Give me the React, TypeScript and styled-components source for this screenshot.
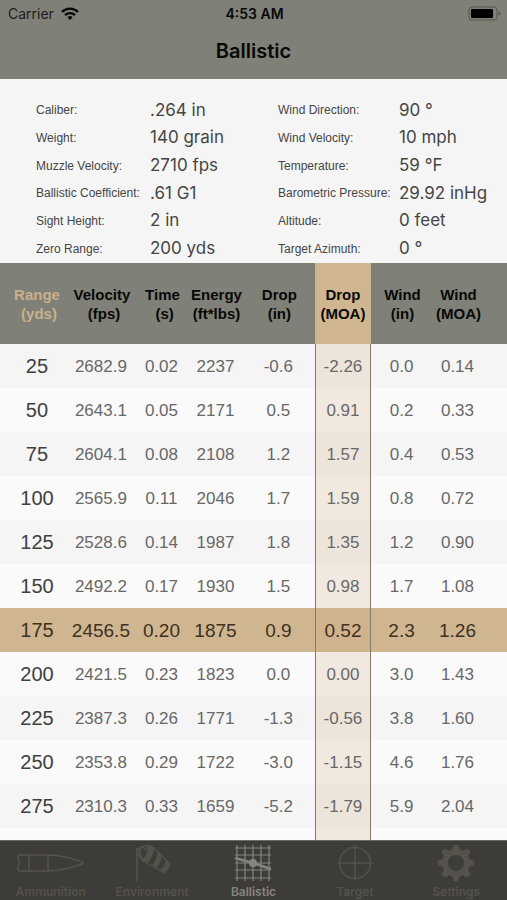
import React from "react";
import styled, { createGlobalStyle } from "styled-components";

const color = {
  bar: "#7f8077",
  ink: "#080806",
  sand: "#d0b690",
  page: "#f5f5f5",
  stripe: "#fafafa",
  tabs: "#3d3c39",
};

const system = `Inter, "Liberation Sans", sans-serif`;
const grotesk = `"Liberation Sans", Arial, sans-serif`;

const GlobalStyle = createGlobalStyle`
  *, *::before, *::after { box-sizing: border-box; }
  body { margin: 0; background: ${color.page}; }
`;

const Page = styled.div`
  display: flex;
  flex-direction: column;
  min-height: 100vh;
  font-family: ${system};
  background: ${color.page};
`;

const Header = styled.header`
  background: ${color.bar};
  color: ${color.ink};
  padding-bottom: 3px;
`;

const StatusBar = styled.div`
  display: grid;
  grid-template-columns: 1fr auto 1fr;
  align-items: center;
  height: 27px;
  padding: 0 6px 0 8px;
  font-size: 14px;
`;

const Carrier = styled.div`
  display: flex;
  align-items: center;
  gap: 7px;
  color: #1d1d1a;
`;

const Clock = styled.div`
  font-weight: 600;
`;

const Power = styled.div`
  display: flex;
  justify-content: flex-end;
`;

const Title = styled.h1`
  margin: 0;
  line-height: 49px;
  font-size: 20px;
  font-weight: 600;
  text-align: center;
`;

const Conditions = styled.section`
  display: grid;
  grid-template-columns: 242fr 229fr;
  padding: 17px 0 1px 36px;
`;

const Facts = styled.dl<{ $label: number }>`
  display: grid;
  grid-template-columns: ${(p) => p.$label}px 1fr;
  grid-template-rows: repeat(6, 1fr);
  align-items: center;
  height: 166px;
  margin: 0;
  color: #454545;
  white-space: nowrap;
`;

const Label = styled.dt`
  padding-top: 1px;
  font: 12px/24px ${grotesk};
`;

const Value = styled.dd`
  margin: 0;
  font-size: 17px;
  line-height: 24px;
`;

const Results = styled.main`
  flex: 1;
`;

const Table = styled.table`
  width: 100%;
  table-layout: fixed;
  border-collapse: separate;
  border-spacing: 0;
  font-family: ${grotesk};
  text-align: center;
  white-space: nowrap;
`;

const Col = styled.col<{ $share: number }>`
  width: ${(p) => p.$share}%;
`;

const HeadCell = styled.th<{ $tone?: "range" | "marked" }>`
  height: 81px;
  padding: 1px 0 0;
  font-size: 15px;
  line-height: 19px;
  font-weight: 700;
  color: ${(p) => (p.$tone === "range" ? "#c9b08b" : color.ink)};
  background: ${(p) => (p.$tone === "marked" ? color.sand : color.bar)};
  &:first-child { padding-left: 6px; }
  &:last-child { padding-right: 24px; }
`;

const Row = styled.tr<{ $active?: boolean }>`
  height: 44px;
  background: ${color.page};
  color: ${(p) => (p.$active ? "#3d3120" : "#686868")};
  font-size: ${(p) => (p.$active ? 19 : 17)}px;
  &:nth-child(even) { background: ${color.stripe}; }
  &&:nth-child(n) { ${(p) => (p.$active ? `background: ${color.sand};` : "")} }
`;

const RangeCell = styled.th<{ $active?: boolean }>`
  padding: 1px 0 0 6px;
  font-size: 20px;
  font-weight: 400;
  color: ${(p) => (p.$active ? "#3d3120" : "#404040")};
`;

const Cell = styled.td<{ $marked?: boolean }>`
  padding: 1px 2px 0 0;
  ${(p) =>
    p.$marked &&
    `padding-right: 0;
     background: rgba(208, 170, 130, 0.22);
     border-left: 1px solid #837a6c;
     border-right: 1px solid #837a6c;`}
  &:last-child { padding-right: 26px; }
`;

const Tail = styled.tr`
  height: 12px;
  background: ${color.stripe};
`;

const TabBar = styled.nav`
  position: sticky;
  bottom: 0;
  display: grid;
  grid-template-columns: repeat(5, 1fr);
  height: 60px;
  background: ${color.tabs};
  border-top: 1px solid #6b6a66;
`;

const Tab = styled.a<{ $active?: boolean }>`
  display: flex;
  flex-direction: column;
  align-items: center;
  padding-top: 3px;
  color: ${(p) => (p.$active ? "#85857f" : "#54524a")};
  font-size: 12px;
  line-height: 16px;
  font-weight: 600;
  text-decoration: none;
  svg { display: block; margin-bottom: 2px; }
`;

const WifiIcon = () => (
  <svg width="18" height="13" viewBox="0 0 18 13" fill="none" stroke={color.ink} strokeWidth="2.3" aria-hidden="true">
    <path d="M1 5C5.400 .6 12.600 .6 17 5" />
    <path d="M4 8.200c2.800-2.700 7.200-2.700 10 0" />
    <path d="M6.500 10.200a3.600 3.600 0 0 1 5 0L9 12.900z" fill={color.ink} stroke="none" />
  </svg>
);

const BatteryIcon = () => (
  <svg width="33" height="15" viewBox="0 0 33 15" aria-hidden="true">
    <rect x="1" y="1" width="28" height="13" rx="3" fill="none" stroke="#56574f" />
    <rect x="3" y="3" width="22" height="9" rx="1" fill="#000" />
    <path d="M30.500 5.500v4q2-.5 2-2t-2-2z" fill="#56574f" />
  </svg>
);

const BulletIcon = () => (
  <svg width="68" height="38" viewBox="0 0 68 38" fill="none" stroke="currentColor" strokeWidth="1.500" aria-hidden="true">
    <path d="M3 11h28c12 0 22 2.500 34 7q2 1 0 2c-12 4.500-22 7-34 7H3q-2 0-2-2v-3l1-1v-4l-1-1v-3q0-2 2-2zM12 11v16M31 11v16" />
  </svg>
);

const WindsockIcon = () => (
  <svg width="38" height="38" viewBox="0 0 38 38" fill="none" stroke="currentColor" strokeWidth="1.300" aria-hidden="true">
    <path d="M4 4v33" strokeWidth="1.600" />
    <path d="M4 5l5-2M4 9l7 9" />
    <path d="M9 3q-4 5 0 12l3 3 20 11 5-9L21 4q-5-4-12-1z" />
    <ellipse cx="11" cy="10" rx="4" ry="8" transform="rotate(-28 11 10)" />
    <path d="M14 2q5 0 7 3-1 9-7 14l-4-4q6-5 4-13zM25 7l4 4q-1 7-5 13l-5-3q5-6 6-14zM33 15l4 5-6 9-4-3q5-4 6-11z" fill="currentColor" stroke="none" />
  </svg>
);

const TrajectoryIcon = () => (
  <svg width="38" height="38" viewBox="0 0 38 38" fill="none" stroke="currentColor" aria-hidden="true">
    <path d="M3 1v36M11 1v36M19 1v36M27 1v36M35 1v36M1 4h36M1 11h36M1 19h36M1 26h36M1 34h36" strokeWidth="1.200" />
    <path d="M1 14l18 5 18 6" strokeWidth="2.800" />
    <circle cx="19" cy="19" r="4" fill="currentColor" stroke="none" />
  </svg>
);

const TargetIcon = () => (
  <svg width="38" height="38" viewBox="0 0 38 38" fill="none" stroke="currentColor" aria-hidden="true">
    <circle cx="19" cy="19" r="15.500" strokeWidth="1.500" />
    <path d="M19 1v36M1 19h36" strokeWidth="1.500" />
  </svg>
);

const GearIcon = () => (
  <svg width="38" height="38" viewBox="0 0 38 38" fill="none" stroke="currentColor" aria-hidden="true">
    <circle cx="19" cy="19" r="11" strokeWidth="6" />
    {[0, 45, 90, 135, 180, 225, 270, 315].map((angle) => (
      <path key={angle} d="M15 7l1.500-6q2.500-.8 5 0L23 7z" fill="currentColor" stroke="none" transform={`rotate(${angle} 19 19)`} />
    ))}
  </svg>
);

const load = [
  ["Caliber:", ".264 in"],
  ["Weight:", "140 grain"],
  ["Muzzle Velocity:", "2710 fps"],
  ["Ballistic Coefficient:", ".61 G1"],
  ["Sight Height:", "2 in"],
  ["Zero Range:", "200 yds"],
];

const weather = [
  ["Wind Direction:", "90 °"],
  ["Wind Velocity:", "10 mph"],
  ["Temperature:", "59 °F"],
  ["Barometric Pressure:", "29.92 inHg"],
  ["Altitude:", "0 feet"],
  ["Target Azimuth:", "0 °"],
];

const columns = [
  { name: "Range", unit: "\u00a0(yds)", share: 13.4 },
  { name: "Velocity", unit: "\u00a0(fps)", share: 13.4 },
  { name: "Time", unit: "\u00a0(s)", share: 10.5 },
  { name: "Energy", unit: "(ft*lbs)", share: 10.8 },
  { name: "Drop", unit: "(in)", share: 14 },
  { name: "Drop", unit: "(MOA)", share: 11.1 },
  { name: "Wind", unit: "(in)", share: 12.4 },
  { name: "Wind", unit: "(MOA)", share: 14.4 },
];

const MARKED = 5;
const ACTIVE_RANGE = "175";

const shots = [
  ["25", "2682.9", "0.02", "2237", "-0.6", "-2.26", "0.0", "0.14"],
  ["50", "2643.1", "0.05", "2171", "0.5", "0.91", "0.2", "0.33"],
  ["75", "2604.1", "0.08", "2108", "1.2", "1.57", "0.4", "0.53"],
  ["100", "2565.9", "0.11", "2046", "1.7", "1.59", "0.8", "0.72"],
  ["125", "2528.6", "0.14", "1987", "1.8", "1.35", "1.2", "0.90"],
  ["150", "2492.2", "0.17", "1930", "1.5", "0.98", "1.7", "1.08"],
  ["175", "2456.5", "0.20", "1875", "0.9", "0.52", "2.3", "1.26"],
  ["200", "2421.5", "0.23", "1823", "0.0", "0.00", "3.0", "1.43"],
  ["225", "2387.3", "0.26", "1771", "-1.3", "-0.56", "3.8", "1.60"],
  ["250", "2353.8", "0.29", "1722", "-3.0", "-1.15", "4.6", "1.76"],
  ["275", "2310.3", "0.33", "1659", "-5.2", "-1.79", "5.9", "2.04"],
];

const tabs = [
  { name: "Ammunition", Icon: BulletIcon },
  { name: "Environment", Icon: WindsockIcon },
  { name: "Ballistic", Icon: TrajectoryIcon },
  { name: "Target", Icon: TargetIcon },
  { name: "Settings", Icon: GearIcon },
];

const FactList = ({ items, label }: { items: string[][]; label: number }) => (
  <Facts $label={label}>
    {items.map(([name, value]) => (
      <React.Fragment key={name}>
        <Label>{name}</Label>
        <Value>{value}</Value>
      </React.Fragment>
    ))}
  </Facts>
);

export default function App() {
  return (
    <Page>
      <GlobalStyle />
      <Header>
        <StatusBar>
          <Carrier>Carrier <WifiIcon /></Carrier>
          <Clock>4:53 AM</Clock>
          <Power><BatteryIcon /></Power>
        </StatusBar>
        <Title>Ballistic</Title>
      </Header>
      <Conditions>
        <FactList items={load} label={114} />
        <FactList items={weather} label={121} />
      </Conditions>
      <Results>
        <Table>
          <colgroup>
            {columns.map((c) => <Col key={c.name + c.unit} $share={c.share} />)}
          </colgroup>
          <thead>
            <tr>
              {columns.map((c, i) => (
                <HeadCell
                  key={c.name + c.unit}
                  scope="col"
                  $tone={i === 0 ? "range" : i === MARKED ? "marked" : undefined}
                >
                  {c.name}<br />{c.unit}
                </HeadCell>
              ))}
            </tr>
          </thead>
          <tbody>
            {shots.map(([range, ...values]) => {
              const active = range === ACTIVE_RANGE;
              return (
                <Row key={range} $active={active}>
                  <RangeCell scope="row" $active={active}>{range}</RangeCell>
                  {values.map((value, i) => (
                    <Cell key={columns[i + 1].name + columns[i + 1].unit} $marked={i + 1 === MARKED}>{value}</Cell>
                  ))}
                </Row>
              );
            })}
          </tbody>
          <tfoot>
            <Tail>
              {columns.map((c, i) => <Cell key={c.name + c.unit} $marked={i === MARKED} />)}
            </Tail>
          </tfoot>
        </Table>
      </Results>
      <TabBar>
        {tabs.map(({ name, Icon }) => (
          <Tab key={name} href={`#${name.toLowerCase()}`} $active={name === "Ballistic"} aria-current={name === "Ballistic" ? "page" : undefined}>
            <Icon />
            {name}
          </Tab>
        ))}
      </TabBar>
    </Page>
  );
}
